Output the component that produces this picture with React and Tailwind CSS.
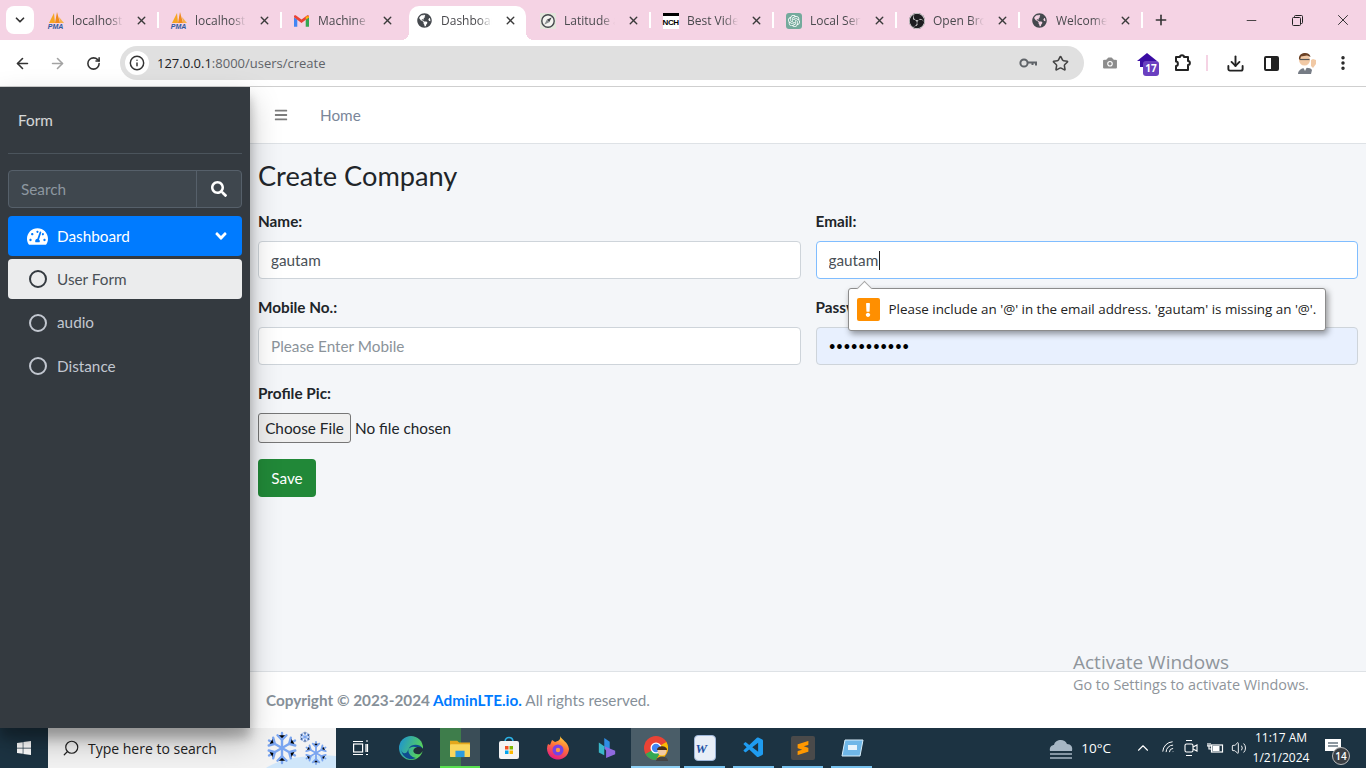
import { ArrowLeft, ArrowRight, RotateCw, Info, Star, Download, EllipsisVertical, Minus, X, Plus, ChevronDown, ChevronUp, Camera, Search, Wifi, Volume2 } from 'lucide-react'
import { FaTachometerAlt, FaSearch, FaBars, FaAngleDown, FaGlobeAmericas, FaWindows, FaExclamation } from 'react-icons/fa'
import { SiOpenai, SiObsstudio, SiSublimetext } from 'react-icons/si'
import { VscVscode } from 'react-icons/vsc'

const PmaIcon = () => (
  <div className="w-[18px] h-[18px] flex flex-col items-center">
    <svg viewBox="0 0 18 11" className="w-[18px] h-[11px]">
      <path d="M2 11 L7 1 L8 11Z" fill="#f6a623" />
      <path d="M8 11 L10 0 L13 11Z" fill="#f08a1d" />
      <path d="M13 11 L12 5 L17 11Z" fill="#f6b04a" />
    </svg>
    <span className="text-[7px] leading-[7px] font-bold italic text-[#2f5a9e] font-['Liberation_Sans',sans-serif]">PMA</span>
  </div>
)

const GmailIcon = () => (
  <svg viewBox="0 0 16 12" className="w-[15px] h-[12px]">
    <path d="M0 2 L0 12 L3.5 12 L3.5 4.5Z" fill="#4285f4" />
    <path d="M12.5 4.5 L12.5 12 L16 12 L16 2Z" fill="#34a853" />
    <path d="M0 2 L8 8 L16 2 L16 1 C16 0 14.5 -0.5 13.5 0.3 L8 4.5 L2.5 0.3 C1.5 -0.5 0 0 0 1Z" fill="#ea4335" />
    <path d="M12.5 1.2 L16 1 L16 2 L12.5 4.5Z" fill="#fbbc04" />
  </svg>
)

const CompassIcon = () => (
  <svg viewBox="0 0 16 16" className="w-4 h-4">
    <rect width="16" height="16" fill="#e4e6dc" />
    <circle cx="8" cy="8" r="6.2" fill="#f4f4f0" stroke="#44484c" strokeWidth="1.4" />
    <path d="M11.8 4.2 L9.2 9.2 L6.8 6.8Z" fill="#44484c" />
    <path d="M4.2 11.8 L6.8 6.8 L9.2 9.2Z" fill="#8a8e90" />
  </svg>
)

const tabs = [
  { title: 'localhost /', icon: <PmaIcon /> },
  { title: 'localhost /', icon: <PmaIcon /> },
  { title: 'Machine t', icon: <GmailIcon /> },
  { title: 'Dashboard', icon: <FaGlobeAmericas className="text-[15px] text-[#45494e]" />, active: true },
  { title: 'Latitude a', icon: <CompassIcon /> },
  { title: 'Best Video', icon: <span className="w-4 h-4 bg-white text-[8px] leading-[13px] font-black text-center text-black border-t-[3px] border-black tracking-tighter font-['Liberation_Sans',sans-serif]">NCH</span> },
  { title: 'Local Serv', icon: <span className="w-4 h-4 rounded-[3px] bg-[#74aa9c] flex items-center justify-center"><SiOpenai className="text-[12px] text-white" /></span> },
  { title: 'Open Brow', icon: <span className="w-[16px] h-[16px] rounded-full bg-[#1d1d20] flex items-center justify-center"><SiObsstudio className="text-[16px] text-[#e8e8e8]" /></span> },
  { title: 'Welcome', icon: <FaGlobeAmericas className="text-[15px] text-[#45494e]" /> },
]

function Tab({ tab, hideSep }) {
  return (
    <div className="relative w-[123px] h-[34px] pb-[5px] flex items-center pl-[11px] pr-[10px] gap-[8px] shrink-0">
      {tab.active && (
        <>
          <span className="absolute left-[4px] right-[2px] top-0 bottom-0 bg-white rounded-t-[10px]" />
          <span className="absolute -left-[4px] bottom-0 w-2 h-2 bg-[radial-gradient(circle_at_0_0,transparent_8px,white_8px)]" />
          <span className="absolute -right-[6px] bottom-0 w-2 h-2 bg-[radial-gradient(circle_at_100%_0,transparent_8px,white_8px)]" />
        </>
      )}
      <span className="relative w-[17px] flex justify-center shrink-0">{tab.icon}</span>
      <span className="relative w-[51px] overflow-hidden whitespace-nowrap text-[12px] text-[#4a4a4e] [mask-image:linear-gradient(to_right,black_72%,transparent)]">{tab.title}</span>
      <X size={13} strokeWidth={2.6} className="relative ml-auto mr-[1px] text-[#3a3a3a] shrink-0" />
      {!hideSep && <span className="absolute right-0 top-[6px] w-[2px] h-[16px] bg-white" />}
    </div>
  )
}

function TitleBar() {
  return (
    <div className="h-[40px] bg-[#f5d3e4] flex items-end pl-[6px] shrink-0 font-['Open_Sans',sans-serif]">
      <div className="w-[28px] h-[28px] mb-[6px] mr-[2px] bg-white rounded-lg flex items-center justify-center">
        <ChevronDown size={14} strokeWidth={3} className="text-[#333]" />
      </div>
      {tabs.map((t, i) => <Tab key={i} tab={t} hideSep={t.active || (tabs[i + 1] && tabs[i + 1].active)} />)}
      <Plus size={16} strokeWidth={2.4} className="ml-[10px] mb-[12px] text-[#333]" />
      <div className="ml-auto flex items-center h-full">
        <div className="w-[46px] flex justify-center"><Minus size={15} strokeWidth={1.3} className="text-[#222]" /></div>
        <div className="w-[46px] flex justify-center">
          <svg viewBox="0 0 11 11" className="w-[11px] h-[11px]" fill="none" stroke="#222" strokeWidth="1">
            <rect x="0.5" y="2.5" width="8" height="8" rx="1" />
            <path d="M2.5 2.5 V1.5 a1 1 0 0 1 1 -1 H9.5 a1 1 0 0 1 1 1 V7.5 a1 1 0 0 1 -1 1 H8.5" />
          </svg>
        </div>
        <div className="w-[46px] flex justify-center"><X size={18} strokeWidth={1.2} className="text-[#222]" /></div>
      </div>
    </div>
  )
}

const KeyIcon = () => (
  <svg viewBox="0 0 18 10" className="ml-auto w-[18px] h-[10px]" fill="none" stroke="#5f6368" strokeWidth="2">
    <circle cx="5" cy="5" r="3.6" />
    <path d="M8.5 4.5 H17 V7.5 M13.5 4.5 V7" />
  </svg>
)

const PuzzleIcon = () => (
  <svg viewBox="0 0 18 18" className="ml-[16px] w-[18px] h-[18px]" fill="none" stroke="#222" strokeWidth="2" strokeLinejoin="round">
    <path d="M3 3 H7 C7 0.5 11 0.5 11 3 H15 V7 C17.5 7 17.5 11 15 11 V16 H3 V12 C5.5 12 5.5 7.5 3 7.5Z" />
  </svg>
)

const Avatar = () => (
  <svg viewBox="0 0 22 22" className="ml-[17px] w-[22px] h-[22px]">
    <circle cx="8.5" cy="8" r="5.5" fill="#f1c9a5" />
    <path d="M3 7 C2 0 14 -1 14.5 5 L11 3.5 L5 4.5 L4 8Z" fill="#6b4226" />
    <path d="M4 7.5 H13.5" stroke="#555" strokeWidth="1.2" />
    <path d="M2 22 C2 15 14 14 16 18 L15 22Z" fill="#767c85" />
    <path d="M7 15 L9 19 L11 15Z" fill="#fff" />
    <path d="M15 14 L15 8 L17 7 L20 8 L20 12 L17 16Z" fill="#f1c9a5" />
  </svg>
)

function Toolbar() {
  return (
    <div className="h-[47px] bg-white border-b border-[#cfcfcf] flex items-center shrink-0 pl-[14px] font-['Open_Sans',sans-serif]">
      <ArrowLeft size={17} strokeWidth={2.3} className="text-[#333]" />
      <ArrowRight size={17} strokeWidth={2.3} className="ml-[18px] text-[#a3a3a3]" />
      <RotateCw size={15} strokeWidth={2.5} className="ml-[20px] text-[#333]" />
      <div className="ml-[19px] w-[964px] h-[34px] rounded-full bg-[#e0e0e0] flex items-center pl-[5px] pr-[15px]">
        <span className="w-[24px] h-[24px] rounded-full bg-white flex items-center justify-center">
          <Info size={16} strokeWidth={2.2} className="text-[#333]" />
        </span>
        <span className="ml-[8px] mt-[1px] text-[13px] text-[#202124]">127.0.0.1<span className="text-[#5f6368]">:8000/users/create</span></span>
        <KeyIcon />
        <Star size={17} strokeWidth={2.2} className="ml-[15px] text-[#444]" />
      </div>
      <Camera size={18} fill="#8c8c8c" strokeWidth={1.5} className="ml-[17px] text-white" />
      <div className="relative ml-[18px] w-[20px] h-[20px] flex items-start">
        <svg viewBox="0 0 20 16" className="w-[20px] h-[16px]"><path d="M0 8 L10 0 L20 8 L16 8 L16 14 L3 14 L3 8Z" fill="#3a0ca3" /></svg>
        <span className="absolute left-[6px] top-[8px] w-[16px] h-[15px] rounded-[3px] bg-[#6a3fc0] text-white text-[10px] leading-[15px] font-bold text-center">17</span>
      </div>
      <PuzzleIcon />
      <span className="ml-[15px] w-[2px] h-[16px] bg-[#f5d3e4]" />
      <Download size={19} strokeWidth={2.4} className="ml-[18px] text-[#222]" />
      <div className="ml-[19px] w-[15px] h-[15px] border-2 border-[#222] rounded-[2px] flex justify-end"><span className="w-[6px] bg-[#222]" /></div>
      <Avatar />
      <EllipsisVertical size={18} strokeWidth={2.6} className="ml-[16px] text-[#222]" />
    </div>
  )
}

const subItems = ['User Form', 'audio', 'Distance']

function Sidebar() {
  return (
    <aside className="relative z-10 w-[250px] shrink-0 bg-[#343a40] px-2 shadow-[0_14px_28px_rgba(0,0,0,0.25),0_10px_10px_rgba(0,0,0,0.22)]">
      <div className="h-[67px] border-b border-[#4b545c] pl-[10px] pt-[21px] text-white/80 leading-6">Form</div>
      <div className="mt-[16px] h-[38px] flex rounded border border-[#56606a] bg-[#3f474e]">
        <span className="flex-1 pl-3 leading-[36px] text-[#8d97a0]">Search</span>
        <span className="w-[45px] border-l border-[#56606a] flex items-center justify-center text-white text-[16px]"><FaSearch /></span>
      </div>
      <div className="mt-2 h-[40px] flex items-center rounded bg-[#007bff] text-white pl-[19px] pr-[12px]">
        <FaTachometerAlt className="text-[21px]" />
        <span className="ml-[9px]">Dashboard</span>
        <FaAngleDown className="ml-auto text-[18px]" />
      </div>
      <ul className="mt-[3px] flex flex-col gap-[3.5px]">
        {subItems.map((item, i) => (
          <li key={item} className={`h-[40px] flex items-center rounded pl-[21px] ${i === 0 ? 'bg-[#ebeced] text-[#4a5056]' : 'text-[#c2c7d0]'}`}>
            <span className={`w-[18px] h-[18px] rounded-full border-2 ${i === 0 ? 'border-[#343a40]' : 'border-[#c2c7d0]'}`} />
            <span className="ml-[10px]">{item}</span>
          </li>
        ))}
      </ul>
    </aside>
  )
}

const inputCls = 'w-full h-[38px] px-3 rounded border text-[#495057] placeholder:text-[#8b939a] outline-none'

function EmailTooltip() {
  return (
    <div className="absolute z-20 left-[32px] top-[47px] w-[478px] h-[43px] bg-white border border-[#8c8c8c] rounded-[3px] shadow-[2px_3px_6px_rgba(0,0,0,0.4)] flex items-center pl-2 font-['Open_Sans',sans-serif]">
      <span className="absolute left-[10px] -top-[6px] w-[11px] h-[11px] bg-white border-l border-t border-[#a8a8a8] rotate-45" />
      <span className="w-[23px] h-[23px] rounded-[2px] bg-[#ff8f00] flex items-center justify-center text-white text-[14px]"><FaExclamation /></span>
      <span className="ml-[9px] text-[13.4px] text-[#222] whitespace-nowrap">Please include an '@' in the email address. 'gautam' is missing an '@'.</span>
    </div>
  )
}

function Main() {
  return (
    <main className="flex-1 min-w-0 flex flex-col bg-[#f4f6f9] text-[#212529]">
      <nav className="h-[57px] bg-white border-b border-[#dee2e6] flex items-center pl-[24px] shrink-0">
        <FaBars className="text-[14px] text-[#7c7c7c]" />
        <span className="ml-[32px] text-[#7a8699]">Home</span>
      </nav>
      <div className="flex-1 px-2 pt-[13px]">
        <h1 className="text-[27.2px] leading-[38px] font-normal">Create Company</h1>
        <form className="mt-[14px] grid grid-cols-2 gap-x-[15px] gap-y-[16px]">
          <div>
            <label className="block font-bold leading-6 mb-[-4px] pb-[12px]">Name:</label>
            <input className={`${inputCls} bg-white border-[#ced4da]`} defaultValue="gautam" readOnly />
          </div>
          <div>
            <label className="block font-bold leading-6 mb-[-4px] pb-[12px]">Email:</label>
            <div className="relative">
              <input className={`${inputCls} bg-white border-[#80bdff]`} defaultValue="gautam" readOnly />
              <span className="absolute left-[63px] top-[10px] w-px h-[19px] bg-[#222]" />
              <EmailTooltip />
            </div>
          </div>
          <div>
            <label className="block font-bold leading-6 mb-[-4px] pb-[12px]">Mobile No.:</label>
            <input className={`${inputCls} bg-white border-[#ced4da]`} placeholder="Please Enter Mobile" readOnly />
          </div>
          <div>
            <label className="block font-bold leading-6 mb-[-4px] pb-[12px]">Password:</label>
            <input type="password" className={`${inputCls} bg-[#e8f0fe] border-[#ced4da] !text-black text-[12.7px]`} defaultValue="gautam12345" readOnly />
          </div>
          <div className="col-span-2">
            <label className="block font-bold leading-6 mb-[-4px] pb-[12px]">Profile Pic:</label>
            <input type="file" className="block h-[30px] text-[#212529] file:h-[30px] file:w-[93px] file:mr-[4px] file:border file:border-[#767676] file:rounded-[3px] file:bg-[#efefef] file:text-[#212529]" />
          </div>
        </form>
        <button className="mt-[16px] h-[38px] w-[58px] rounded bg-[#218838] text-white">Save</button>
      </div>
      <footer className="relative h-[57px] bg-white border-t border-[#dee2e6] pl-[16px] flex items-center shrink-0 text-[#869099]">
        <span><b>Copyright © 2023-2024 <span className="text-[#007bff]">AdminLTE.io.</span></b> All rights reserved.</span>
        <div className="absolute left-[823px] -top-[22px] text-[#8f959b] font-['Open_Sans',sans-serif] leading-none">
          <p className="text-[19px] leading-[24px]">Activate Windows</p>
          <p className="text-[14.4px] leading-[22px]">Go to Settings to activate Windows.</p>
        </div>
      </footer>
    </main>
  )
}

const EdgeIcon = () => (
  <svg viewBox="0 0 24 24" className="w-[24px] h-[24px]">
    <defs>
      <linearGradient id="edgeA" x1="0" y1="0" x2="1" y2="0.4">
        <stop offset="0" stopColor="#1a8fd8" />
        <stop offset="1" stopColor="#58d25a" />
      </linearGradient>
    </defs>
    <circle cx="12" cy="12" r="12" fill="url(#edgeA)" />
    <path d="M24 13 C22 8 13 7 10 12 C8 16 11 21 17 22 C11 25 3 22 2 13 C3 19 8 18 9 14 C10 11 16 9 20 13Z" fill="#0f4c90" />
    <path d="M24 13 C23 11 18 10 15 13 C13 16 16 19 21 18 L24 15Z" fill="#1f2f3a" />
  </svg>
)

const FirefoxIcon = () => (
  <svg viewBox="0 0 24 24" className="w-[24px] h-[24px]">
    <defs>
      <linearGradient id="foxA" x1="0.7" y1="0" x2="0.3" y2="1">
        <stop offset="0" stopColor="#ffd23a" />
        <stop offset="0.45" stopColor="#ff7139" />
        <stop offset="1" stopColor="#e31587" />
      </linearGradient>
    </defs>
    <path d="M14 0 C16 4 22 6 23 13 A11 11 0 1 1 2 8 L4 9 L6 4 L9 6 C12 5 15 4 14 0Z" fill="url(#foxA)" />
    <circle cx="12" cy="14" r="5.5" fill="#7542e5" />
    <circle cx="12" cy="14" r="2.2" fill="#ff9640" />
  </svg>
)

const CopilotIcon = () => (
  <svg viewBox="0 0 22 24" className="w-[20px] h-[24px]">
    <path d="M8 1 L14 5 L14 16 L8 13Z" fill="#2f8de4" />
    <path d="M8 10 L20 15 L20 19 L10 23 L10 15Z" fill="#8f6ae0" />
    <path d="M2 6 L8 10 L8 20 L2 17Z" fill="#39b7c9" />
  </svg>
)

const StoreIcon = () => (
  <svg viewBox="0 0 22 24" className="w-[22px] h-[24px]">
    <path d="M7 6 C7 0 15 0 15 6" fill="none" stroke="#2bb2e6" strokeWidth="1.6" />
    <rect x="1" y="5" width="20" height="18" rx="2" fill="#f4f4f4" />
    <rect x="7" y="10" width="3.5" height="3.5" fill="#f25022" />
    <rect x="11.5" y="10" width="3.5" height="3.5" fill="#7fba00" />
    <rect x="7" y="14.5" width="3.5" height="3.5" fill="#00a4ef" />
    <rect x="11.5" y="14.5" width="3.5" height="3.5" fill="#ffb900" />
  </svg>
)

const ExplorerIcon = () => (
  <svg viewBox="0 0 24 22" className="relative w-[22px] h-[20px]">
    <path d="M1 3 L9 3 L11 5 L23 5 L23 9 L1 9Z" fill="#e3a71c" />
    <rect x="1" y="7" width="22" height="14" rx="1" fill="#f9d65c" />
    <rect x="7" y="14" width="10" height="7" fill="#2b9be0" />
  </svg>
)

const ChromeIcon = () => (
  <div className="relative w-[24px] h-[24px]">
    <svg viewBox="0 0 24 24" className="w-[24px] h-[24px]">
      <circle cx="12" cy="12" r="12" fill="#ea4335" />
      <path d="M12 12 L1.6 18 A12 12 0 0 0 12 24 L18 14Z" fill="#34a853" />
      <path d="M12 12 L22.4 6 A12 12 0 0 1 12 24 L18 14Z" fill="#fbbc04" />
      <circle cx="12" cy="12" r="5.5" fill="#fff" />
      <circle cx="12" cy="12" r="4.2" fill="#4285f4" />
    </svg>
    <svg viewBox="0 0 14 16" className="absolute left-[11px] top-[9px] w-[14px] h-[16px]">
      <circle cx="7" cy="6" r="4.5" fill="#f1c9a5" />
      <path d="M2 5 C2 0 12 0 12 5Z" fill="#4b2e16" />
      <path d="M1 16 C1 10 13 10 13 16Z" fill="#444" />
    </svg>
  </div>
)

const WordIcon = () => (
  <div className="relative w-[22px] h-[26px] bg-[#e8eef7] rounded-sm border border-[#9fb7d9]">
    <span className="absolute left-[1px] top-[6px] text-[13px] leading-[14px] font-black italic text-[#1d4fa3] font-['Liberation_Serif',serif]">W</span>
  </div>
)

const DesktopIcon = () => (
  <svg viewBox="0 0 24 20" className="w-[24px] h-[20px]">
    <path d="M5 2 L23 2 L20 18 L2 18Z" fill="#6fb7e8" stroke="#d8eefb" strokeWidth="1" />
    <rect x="8" y="7" width="9" height="5" fill="#e7f4fc" />
  </svg>
)

const Flake = ({ x, y, r, sw = 1.6 }) => (
  <g transform={`translate(${x} ${y})`} stroke="#7aa5f0" strokeWidth={sw} strokeLinecap="round">
    {[0, 60, 120].map((a) => (
      <g key={a} transform={`rotate(${a})`}>
        <path d={`M0 ${-r} V${r}`} />
        <path d={`M${-r * 0.3} ${-r * 0.85} L0 ${-r * 0.55} L${r * 0.3} ${-r * 0.85} M${-r * 0.3} ${r * 0.85} L0 ${r * 0.55} L${r * 0.3} ${r * 0.85}`} />
      </g>
    ))}
  </g>
)

const SnowArt = () => (
  <svg viewBox="0 0 70 40" className="absolute right-0 top-0 w-[70px] h-[40px]">
    <path d="M0 40 C15 30 45 26 70 28 V40Z" fill="#cfe6fa" />
    <Flake x={16} y={20} r={15} sw={2.4} />
    <Flake x={39} y={9} r={5} sw={1} />
    <Flake x={50} y={25} r={11} sw={1.8} />
  </svg>
)

const taskIcons = [
  { icon: <EdgeIcon /> },
  { icon: <ExplorerIcon />, explorer: true },
  { icon: <StoreIcon /> },
  { icon: <FirefoxIcon /> },
  { icon: <CopilotIcon /> },
  { icon: <ChromeIcon />, cls: 'bg-[#4a5d68]', bar: 'left-0 right-0 bg-[#8ed0f5]' },
  { icon: <WordIcon />, bar: 'left-[4px] right-[4px] bg-[#76c1ee]' },
  { icon: <VscVscode className="text-[24px] text-[#1f9cf0]" />, bar: 'left-[4px] right-[4px] bg-[#76c1ee]' },
  { icon: <span className="w-[24px] h-[24px] rounded-[2px] bg-[#4a4a4a] flex items-center justify-center"><SiSublimetext className="text-[14px] text-[#ff9800]" /></span>, bar: 'left-[4px] right-[4px] bg-[#76c1ee]' },
  { icon: <DesktopIcon />, bar: 'left-[4px] right-[4px] bg-[#76c1ee]' },
]

function Taskbar() {
  return (
    <div className="h-[40px] bg-[#1c3342] flex items-center shrink-0 text-white font-['Open_Sans',sans-serif]">
      <div className="w-[48px] flex justify-center"><FaWindows className="text-[16px]" /></div>
      <div className="relative w-[288px] h-[40px] bg-[#f3f3f3] flex items-center pl-[14px] text-[#222] overflow-hidden">
        <Search size={18} strokeWidth={1.6} className="-scale-x-100" />
        <span className="ml-[8px] text-[14px]">Type here to search</span>
        <SnowArt />
      </div>
      <div className="w-[50px] flex justify-center">
        <svg viewBox="0 0 16 16" className="w-[16px] h-[16px]" fill="none" stroke="#fff" strokeWidth="1.2">
          <path d="M0 1.5 H10 M0 14.5 H10" />
          <rect x="0.6" y="4" width="9" height="8" />
          <path d="M13 1 H15 M13 4 V12 M14.5 4 V12 M13 14.5 H15" />
        </svg>
      </div>
      <div className="flex">
        {taskIcons.map((t, i) => (
          <div key={i} className={`relative h-[40px] w-[49px] flex items-center justify-center ${t.cls || ''}`}>
            {t.explorer && (
              <>
                <span className="absolute left-[5px] w-[21px] top-0 bottom-0 bg-[#3e7d4b]" />
                <span className="absolute left-[26px] w-[19px] top-0 bottom-0 bg-[#3a4d57]" />
                <span className="absolute left-[5px] w-[40px] bottom-0 h-[2px] bg-[#58e04f]" />
              </>
            )}
            {t.icon}
            {t.bar && <span className={`absolute bottom-0 h-[2px] ${t.bar}`} />}
          </div>
        ))}
      </div>
      <div className="ml-auto flex items-center">
        <svg viewBox="0 0 26 26" className="w-[26px] h-[26px]">
          <path d="M2 16 C1 12 4 10 6 10 C7 4 17 3 19 9 C23 9 25 12 24 16Z" fill="#a6b6c4" />
          <path d="M2 19 H24 M2 23 H24" stroke="#a6b6c4" strokeWidth="1.6" />
        </svg>
        <span className="ml-[7px] text-[13.5px]">10°C</span>
        <ChevronUp size={18} strokeWidth={1.5} className="ml-[23px]" />
        <Wifi size={16} strokeWidth={1.4} className="ml-[9px] -scale-x-100 rotate-[-45deg]" />
        <svg viewBox="0 0 16 18" className="ml-[6px] w-[16px] h-[18px]" fill="none" stroke="#fff" strokeWidth="1.1">
          <rect x="2" y="5" width="8" height="8" rx="1.5" />
          <path d="M10 8 L14 6 V12 L10 10 M3 1.5 H9 M3 16.5 H9" />
        </svg>
        <svg viewBox="0 0 18 14" className="ml-[7px] w-[18px] h-[14px]" fill="none" stroke="#fff" strokeWidth="1.2">
          <rect x="5.5" y="4" width="11" height="7" />
          <rect x="6.5" y="5" width="7" height="5" fill="#fff" stroke="none" />
          <path d="M1 5 H5 M2 2 V5 M4 2 V5 M3 5 V8 H5" />
        </svg>
        <Volume2 size={16} strokeWidth={1.4} className="ml-[7px]" />
        <div className="ml-[5px] w-[58px] text-center text-[12px] leading-[20px]">
          <p>11:17 AM</p>
          <p>1/21/2024</p>
        </div>
        <div className="relative w-[56px] h-[40px]">
          <svg viewBox="0 0 16 16" className="absolute left-[15px] top-[11px] w-[16px] h-[16px]" fill="#fff"><path d="M0 0 H16 V12 H0Z" /><path d="M3 4 H13 M3 7 H13" stroke="#1c3342" strokeWidth="1.2" /></svg>
          <span className="absolute left-[22px] top-[19px] w-[18px] h-[18px] rounded-full bg-[#3a3f44] border border-[#bbb] text-[10px] leading-[16px] text-center font-semibold">14</span>
        </div>
      </div>
    </div>
  )
}

export default function App() {
  return (
    <div className="h-screen flex flex-col overflow-hidden font-['Lato',sans-serif] text-[15.3px]">
      <TitleBar />
      <Toolbar />
      <div className="flex-1 min-h-0 flex">
        <Sidebar />
        <Main />
      </div>
      <Taskbar />
    </div>
  )
}
